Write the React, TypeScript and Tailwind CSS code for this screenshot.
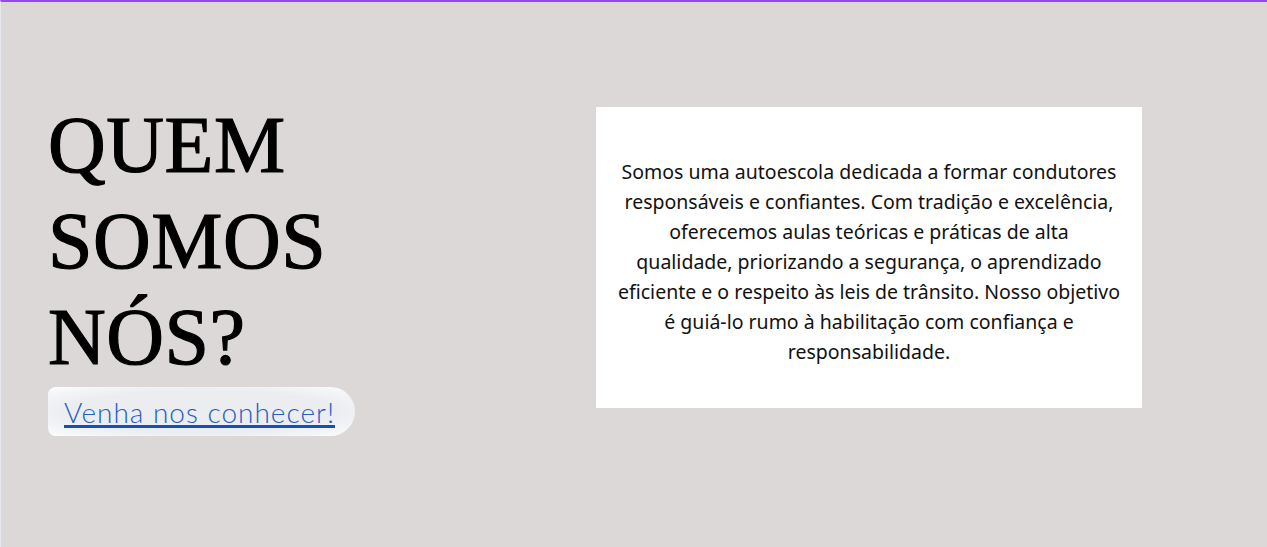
export default function App() {
  return (
    <div className="min-h-[547px] w-full bg-[#dcd8d8] border-t-2 border-[#9547f2] border-l border-l-[#e6e6ee]">
      <section className="flex items-start pl-[47px] pt-[95px]">
        {/* left column: title + link */}
        <div className="w-[548px] shrink-0">
          <h1
            className="text-[80px] leading-[96px] tracking-[0.5px] text-black font-normal [-webkit-text-stroke:1.2px_black]"
            style={{ fontFamily: '"Liberation Serif", serif' }}
          >
            QUEM
            <br />
            SOMOS
            <br />
            NÓS?
          </h1>
          <div className="mt-[2px] inline-flex h-[49px] w-[307px] items-center rounded-l-[8px] rounded-r-[26px] bg-[radial-gradient(ellipse_at_center,#ebedf0_62%,#f7f8fa_90%,#ffffff_100%)] pl-[16px]">
            <a
              href="#"
              className="text-[28px] font-light tracking-[1px] text-[#1f5ec4] underline decoration-[#1650b5] decoration-[3px] underline-offset-[2px]"
              style={{ fontFamily: 'Lato, "Open Sans", sans-serif' }}
            >
              Venha nos conhecer!
            </a>
          </div>
        </div>

        {/* right column: text card */}
        <div className="mt-[10px] flex h-[301px] w-[546px] items-center justify-center bg-white pt-[9px]">
          <p
            className="text-center text-[19.5px] leading-[30px] text-[#111]"
            style={{ fontFamily: '"Noto Sans", sans-serif' }}
          >
            Somos uma autoescola dedicada a formar condutores
            <br />
            responsáveis e confiantes. Com tradição e excelência,
            <br />
            oferecemos aulas teóricas e práticas de alta
            <br />
            qualidade, priorizando a segurança, o aprendizado
            <br />
            eficiente e o respeito às leis de trânsito. Nosso objetivo
            <br />
            é guiá-lo rumo à habilitação com confiança e
            <br />
            responsabilidade.
          </p>
        </div>
      </section>
    </div>
  );
}
